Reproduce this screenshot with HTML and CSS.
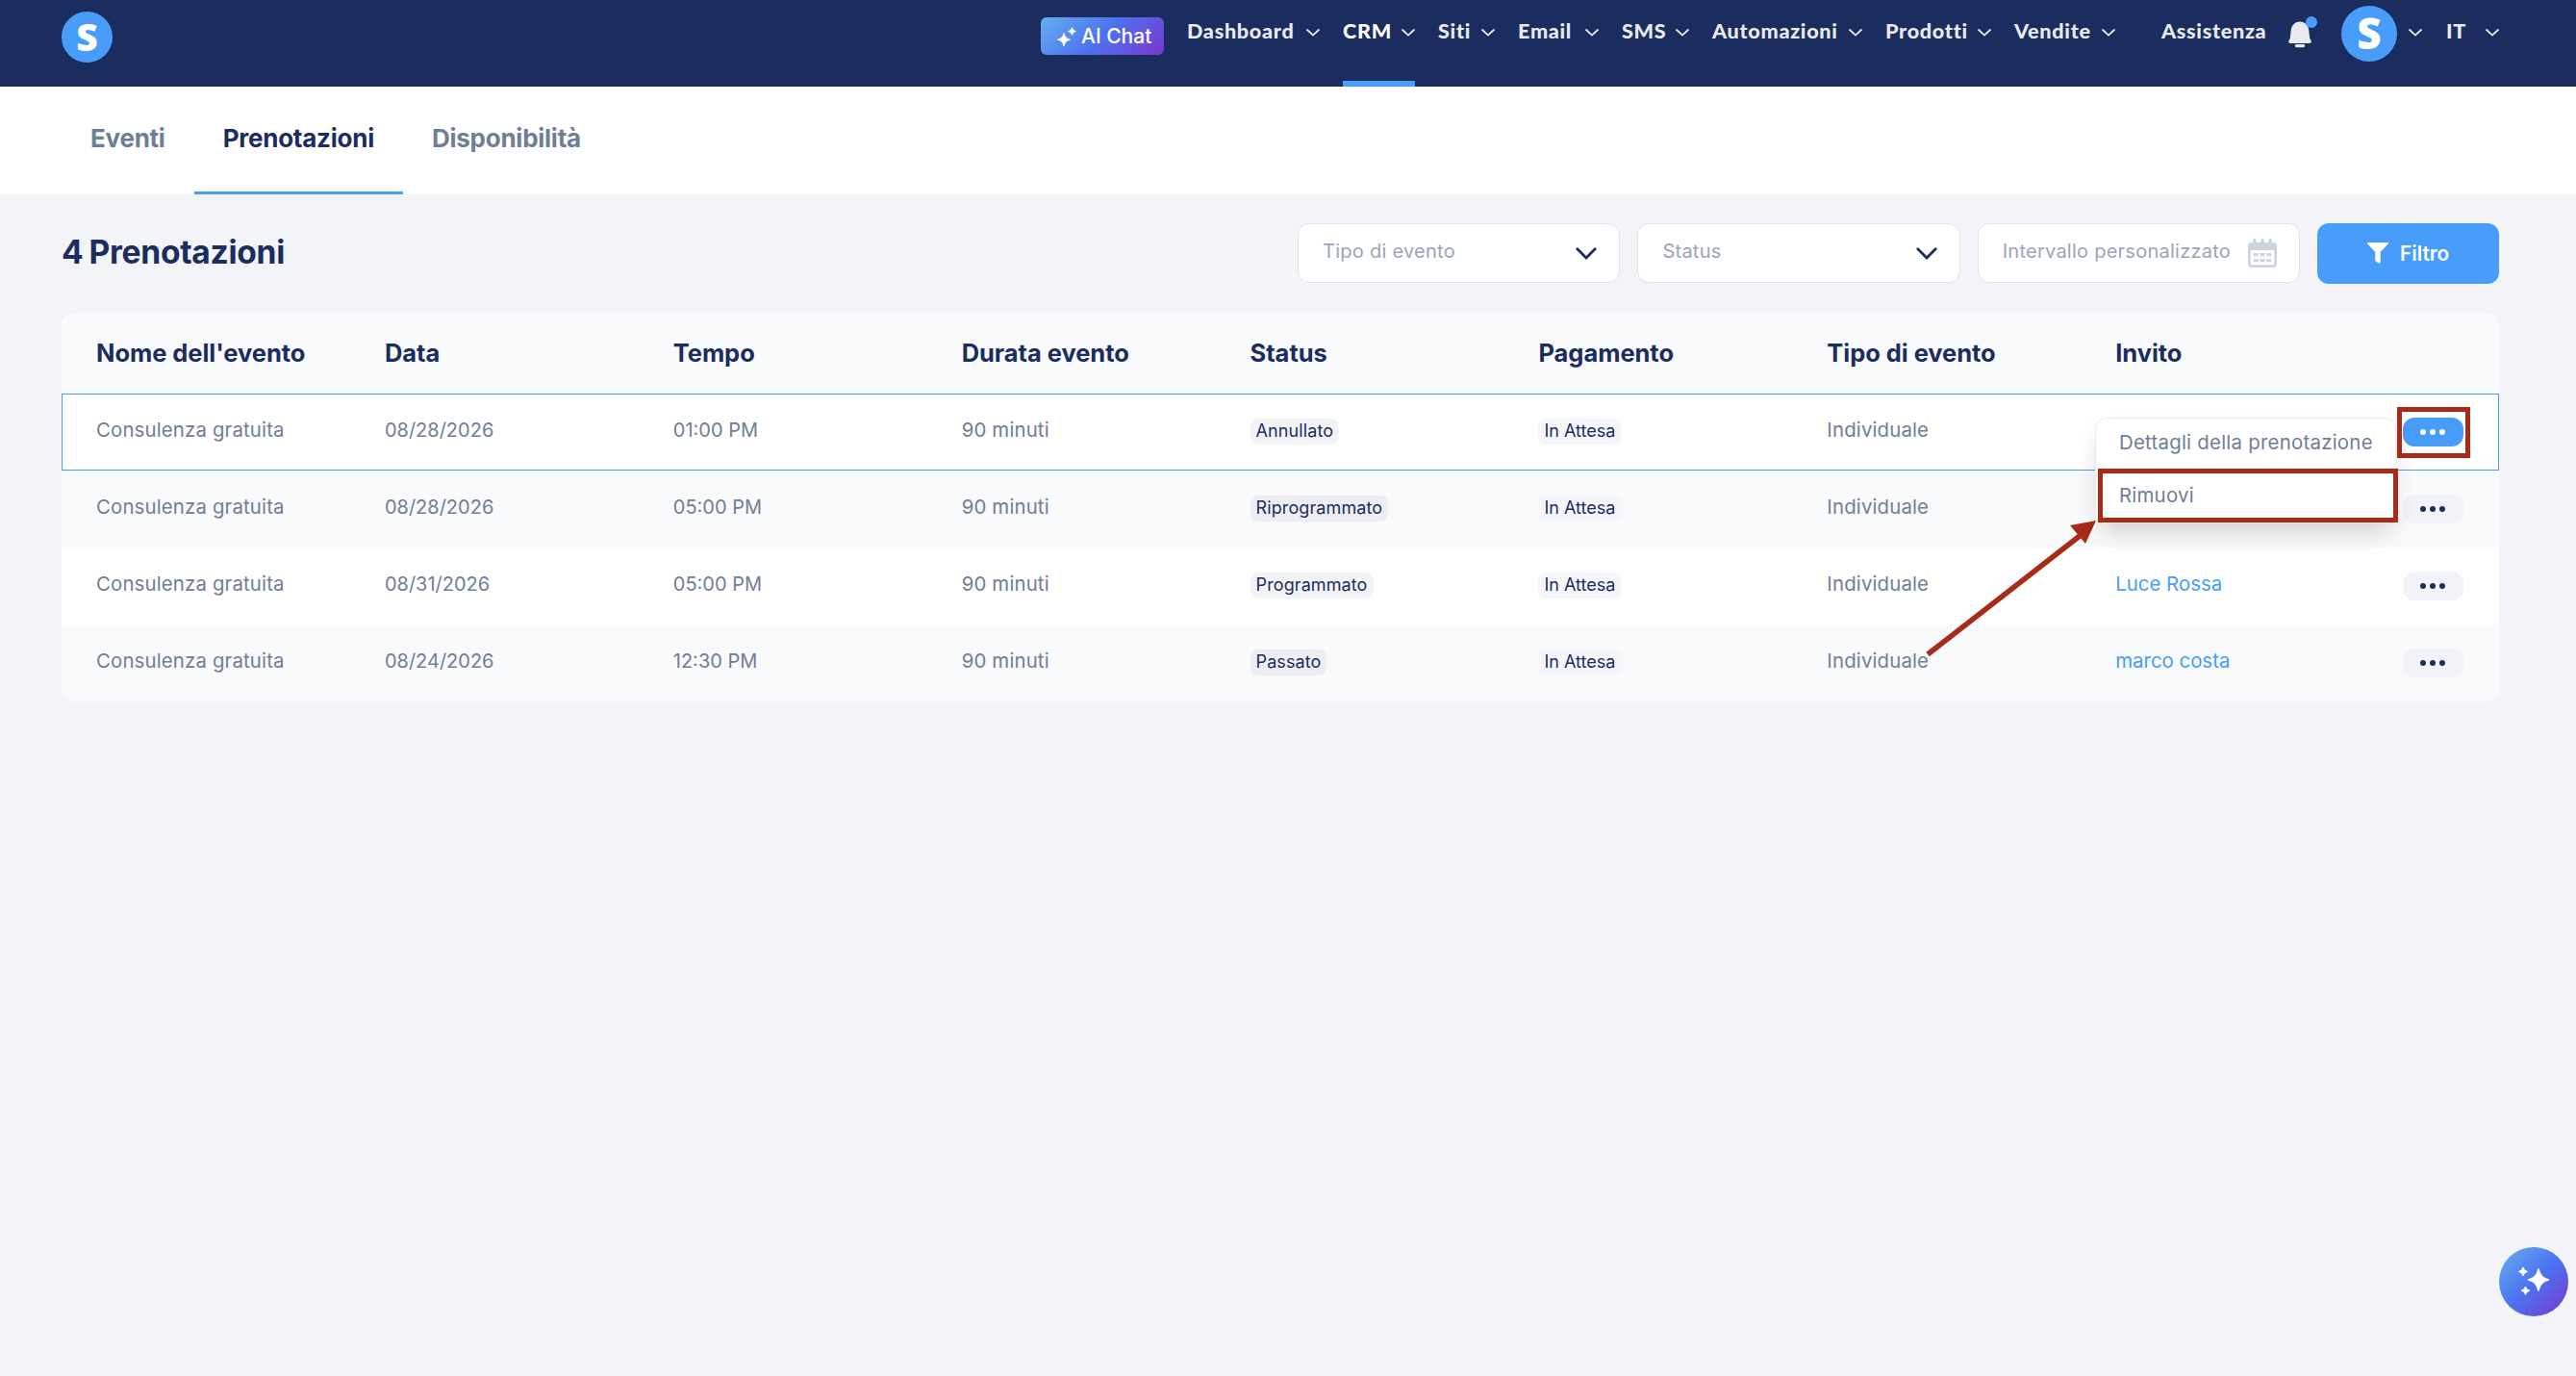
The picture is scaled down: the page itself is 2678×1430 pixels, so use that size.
FILE: index.html
```html
<!DOCTYPE html>
<html lang="it">
<head>
    <meta charset="UTF-8">
    <meta name="viewport" content="width=device-width, initial-scale=1.0">
    <title>Prenotazioni</title>
    <link rel="stylesheet" href="styles.css">
</head>
<body>

    <!-- Shared icons -->
    <svg class="sprite" width="0" height="0">
        <symbol id="chevron" viewBox="0 0 14 8">
            <path d="M1 1l6 5.6L13 1" fill="none" stroke="currentColor" stroke-width="1.8" stroke-linecap="round"/>
        </symbol>
        <symbol id="select-arrow" viewBox="0 0 22 13">
            <path d="M1.8 1.8L11 11l9.2-9.2" fill="none" stroke="currentColor" stroke-width="2.8" stroke-linecap="round"/>
        </symbol>
        <symbol id="dots" viewBox="0 0 26 6">
            <circle cx="3" cy="3" r="3"/>
            <circle cx="13" cy="3" r="3"/>
            <circle cx="23" cy="3" r="3"/>
        </symbol>
    </svg>

    <header class="header">
        <div class="logo">S</div>
        <button class="ai-chat">
            <svg width="20" height="20" viewBox="0 0 20 20" fill="#fff">
                <path d="M7 6.5Q8 12 13.5 13.2Q8 14.4 7 20Q6 14.4 .3 13.2Q6 12 7 6.5Z" stroke="#fff" stroke-width=".8"/>
                <path d="M15.5 .3Q16.2 3.8 19.8 4.5Q16.2 5.2 15.5 8.7Q14.8 5.2 11.2 4.5Q14.8 3.8 15.5 .3Z" stroke="#fff" stroke-width=".5"/>
            </svg>
            AI Chat
        </button>
        <nav class="nav">
            <a class="nav-item">Dashboard <svg class="chevron"><use href="#chevron"/></svg></a>
            <a class="nav-item active">CRM <svg class="chevron"><use href="#chevron"/></svg></a>
            <a class="nav-item">Siti <svg class="chevron"><use href="#chevron"/></svg></a>
            <a class="nav-item">Email <svg class="chevron"><use href="#chevron"/></svg></a>
            <a class="nav-item">SMS <svg class="chevron"><use href="#chevron"/></svg></a>
            <a class="nav-item">Automazioni <svg class="chevron"><use href="#chevron"/></svg></a>
            <a class="nav-item">Prodotti <svg class="chevron"><use href="#chevron"/></svg></a>
            <a class="nav-item">Vendite <svg class="chevron"><use href="#chevron"/></svg></a>
        </nav>
        <div class="user-menu">
            <a class="nav-item support">Assistenza</a>
            <svg class="bell" width="30" height="33" viewBox="0 0 30 33">
                <path d="M12 5.5C6.5 5.5 3.3 9.5 2.7 14.5L1.8 22.5C1.6 24 .3 24.5 .3 26.3Q.3 28 2 28H22Q23.8 28 23.8 26.3C23.8 24.5 22.4 24 22.2 22.5L21.3 14.5C20.7 9.5 17.5 5.5 12 5.5Z" fill="#e9eaef"/>
                <rect x="6.8" y="29" width="10.4" height="3.2" rx="1.6" fill="#e9eaef"/>
                <circle cx="24" cy="6" r="6" fill="#479df9"/>
            </svg>
            <div class="avatar">S</div>
            <svg class="chevron"><use href="#chevron"/></svg>
            <a class="nav-item lang">IT <svg class="chevron"><use href="#chevron"/></svg></a>
        </div>
    </header>

    <div class="tabs">
        <a class="tab">Eventi</a>
        <a class="tab active">Prenotazioni</a>
        <a class="tab">Disponibilità</a>
    </div>

    <main class="content">
        <div class="toolbar">
            <h1>4 Prenotazioni</h1>
            <div class="field">Tipo di evento <svg class="select-arrow"><use href="#select-arrow"/></svg></div>
            <div class="field">Status <svg class="select-arrow"><use href="#select-arrow"/></svg></div>
            <div class="field">Intervallo personalizzato
                <svg class="calendar" width="30" height="30" viewBox="0 0 30 30">
                    <path fill="#cbd4e1" fill-rule="evenodd" d="M5 2Q5 0 6.7 0T8.5 2V4H13.3V2Q13.3 0 15 0T16.8 2V4H21.5V2Q21.5 0 23.3 0T25 2V4H26Q30 4 30 8V26Q30 30 26 30H4Q0 30 0 26V8Q0 4 4 4H5ZM2.7 12V25.5Q2.7 27.3 4.5 27.3H25.5Q27.3 27.3 27.3 25.5V12Z"/>
                    <g fill="#cbd4e1">
                        <rect x="5.7" y="15" width="5" height="3.3" rx=".8"/>
                        <rect x="12.5" y="15" width="5" height="3.3" rx=".8"/>
                        <rect x="19.3" y="15" width="5" height="3.3" rx=".8"/>
                        <rect x="5.7" y="21" width="5" height="3.3" rx=".8"/>
                        <rect x="12.5" y="21" width="5" height="3.3" rx=".8"/>
                        <rect x="19.3" y="21" width="5" height="3.3" rx=".8"/>
                    </g>
                </svg>
            </div>
            <button class="filter-btn">
                <svg width="22" height="22" viewBox="0 0 22 22" fill="#fff">
                    <path d="M.8 0H21.2Q22.5 .6 21.4 1.8L13.7 9.8V20.8Q13.5 21.9 12.3 21.5L9.2 19.8Q8.3 19 8.3 18V9.8L.5 1.8Q-.5 .6 .8 0Z"/>
                </svg>
                Filtro
            </button>
        </div>

        <div class="table">
            <div class="row head">
                <div>Nome dell'evento</div>
                <div>Data</div>
                <div>Tempo</div>
                <div>Durata evento</div>
                <div>Status</div>
                <div>Pagamento</div>
                <div>Tipo di evento</div>
                <div>Invito</div>
                <div></div>
            </div>
            <div class="row selected">
                <div>Consulenza gratuita</div>
                <div class="num">08/28/2026</div>
                <div class="num">01:00 PM</div>
                <div>90 minuti</div>
                <div><span class="badge">Annullato</span></div>
                <div><span class="badge pending">In Attesa</span></div>
                <div>Individuale</div>
                <div></div>
                <div class="actions">
                    <button class="more open"><svg width="26" height="6"><use href="#dots"/></svg></button>
                    <div class="menu">
                        <a>Dettagli della prenotazione</a>
                        <a class="marked">Rimuovi</a>
                    </div>
                    <div class="more-mark"></div>
                </div>
            </div>
            <div class="row">
                <div>Consulenza gratuita</div>
                <div class="num">08/28/2026</div>
                <div class="num">05:00 PM</div>
                <div>90 minuti</div>
                <div><span class="badge">Riprogrammato</span></div>
                <div><span class="badge pending">In Attesa</span></div>
                <div>Individuale</div>
                <div></div>
                <div class="actions"><button class="more"><svg width="26" height="6"><use href="#dots"/></svg></button></div>
            </div>
            <div class="row">
                <div>Consulenza gratuita</div>
                <div class="num">08/31/2026</div>
                <div class="num">05:00 PM</div>
                <div>90 minuti</div>
                <div><span class="badge">Programmato</span></div>
                <div><span class="badge pending">In Attesa</span></div>
                <div>Individuale</div>
                <div><a class="link">Luce Rossa</a></div>
                <div class="actions"><button class="more"><svg width="26" height="6"><use href="#dots"/></svg></button></div>
            </div>
            <div class="row">
                <div>Consulenza gratuita</div>
                <div class="num">08/24/2026</div>
                <div class="num">12:30 PM</div>
                <div>90 minuti</div>
                <div><span class="badge">Passato</span></div>
                <div><span class="badge pending">In Attesa</span></div>
                <div>Individuale</div>
                <div><a class="link">marco costa</a></div>
                <div class="actions"><button class="more"><svg width="26" height="6"><use href="#dots"/></svg></button></div>
            </div>
        </div>
    </main>

    <!-- Arrow pointing at the remove action -->
    <svg class="arrow" width="180" height="145" viewBox="0 0 180 145">
        <path d="M4 140L162 17" stroke="#a82b17" stroke-width="5.5"/>
        <path d="M179 1L152 6L168 25Z" fill="#a82b17"/>
    </svg>

    <button class="fab">
        <svg width="32" height="32" viewBox="0 0 32 32" fill="#fff">
            <path d="M21 3Q23 12.5 31.5 14Q23 15.5 21 25Q19 15.5 10.5 14Q19 12.5 21 3Z" stroke="#fff" stroke-width="1.5" stroke-linejoin="round"/>
            <path d="M5 1Q5.8 4.8 9.5 5.5Q5.8 6.2 5 10Q4.2 6.2 .5 5.5Q4.2 4.8 5 1Z" stroke="#fff"/>
            <path d="M7.5 21Q8.3 24.5 12 25.2Q8.3 26 7.5 29.5Q6.7 26 3 25.2Q6.7 24.5 7.5 21Z" stroke="#fff"/>
        </svg>
    </button>

</body>
</html>
```
FILE: styles.css
```css
* {
    box-sizing: border-box;
}
body {
    font-family: Inter, sans-serif;
    font-size: 20px;
    background-color: #f2f4f8;
    color: #6f7e97;
    margin: 0;
    min-height: 1430px;
}
button {
    font-family: inherit;
    border: none;
    padding: 0;
    cursor: pointer;
}
.sprite {
    position: absolute;
}

/* Header */
.header {
    display: flex;
    align-items: flex-start;
    height: 90px;
    padding: 0 80px 0 64px;
    background-color: #1b2d5f;
    border-bottom: 1px solid #14244f;
}
.logo,
.avatar {
    display: flex;
    align-items: center;
    justify-content: center;
    border-radius: 50%;
    background-color: #479df9;
    color: white;
    font-family: "Open Sans", sans-serif;
    font-weight: 800;
    line-height: 1;
}
.logo {
    width: 53px;
    height: 53px;
    margin-top: 12px;
    padding-bottom: 2px;
    font-size: 39px;
}
.avatar {
    width: 58px;
    height: 58px;
    margin: 6px 12px 0 25px;
    padding-bottom: 2px;
    font-size: 44px;
}
.ai-chat {
    display: flex;
    align-items: center;
    gap: 5px;
    width: 128px;
    height: 39px;
    margin: 18px 24px 0 auto;
    padding-left: 17px;
    border-radius: 6px;
    background: linear-gradient(135deg, #67afee 0%, #4c74f0 48%, #7a36cc 100%);
    color: white;
    font-size: 21px;
    font-weight: 500;
    white-space: nowrap;
}
.nav {
    display: grid;
    grid-template-columns: 138px 75px 59px 84px 70px 156px 110px 105px;
    column-gap: 24px;
}
.nav-item {
    display: flex;
    align-items: flex-start;
    justify-content: space-between;
    height: 90px;
    padding-top: 20px;
    color: #e9eaef;
    font-family: Lato, sans-serif;
    font-size: 21.6px;
    font-weight: 900;
    letter-spacing: 0.7px;
    line-height: 24px;
    white-space: nowrap;
}
.nav-item.active {
    color: white;
    border-bottom: 6px solid #479df9;
}
.chevron {
    width: 14px;
    height: 8px;
    margin-top: 10px;
    color: #e9eaef;
}
.user-menu {
    display: flex;
    align-items: flex-start;
    margin-left: 48px;
}
.support {
    width: 132px;
}
.bell {
    margin-top: 17px;
}
.user-menu > .chevron {
    margin-top: 30px;
}
.lang {
    width: 55px;
    margin-left: 25px;
}

/* Tabs */
.tabs {
    display: flex;
    height: 112px;
    padding-left: 64px;
    background-color: white;
}
.tab {
    display: flex;
    align-items: center;
    padding: 0 30px 2px;
    border-bottom: 3px solid transparent;
    color: #6f7e97;
    font-size: 26px;
    font-weight: 700;
    letter-spacing: -0.25px;
}
.tab.active {
    color: #1b2d5f;
    border-bottom-color: #479df9;
}

/* Title and filters */
.content {
    padding: 30px 80px 0 64px;
}
.toolbar {
    display: flex;
    align-items: flex-start;
    gap: 18px;
    height: 63px;
}
h1 {
    margin: 0 auto 0 0;
    color: #1b2d5f;
    font-size: 33.6px;
    font-weight: 700;
    letter-spacing: -0.3px;
    word-spacing: -1.5px;
    line-height: 60px;
}
.field {
    display: flex;
    align-items: center;
    justify-content: space-between;
    width: 335.3px;
    height: 62px;
    padding: 0 23px 4px 25px;
    background-color: white;
    border: 1px solid #dfe4ea;
    border-radius: 12px;
    color: #9aa5b8;
    letter-spacing: 0.25px;
    white-space: nowrap;
}
.select-arrow {
    width: 22px;
    height: 13px;
    margin-top: 4px;
    color: #1b2d5f;
}
.calendar {
    margin-top: 4px;
}
.filter-btn {
    display: flex;
    align-items: center;
    gap: 12px;
    width: 189px;
    height: 63px;
    padding: 0 0 1px 52px;
    border-radius: 12px;
    background-color: #479df9;
    color: white;
    font-size: 20.8px;
    font-weight: 600;
}

/* Bookings table */
.table {
    margin-top: 30px;
    border-radius: 12px;
    background-color: #f9fafc;
}
.row {
    display: grid;
    grid-template-columns: repeat(8, 299.9px) 134.8px;
    align-items: center;
    height: 80px;
    font-size: 20.4px;
    letter-spacing: 0.15px;
}
.row > div {
    padding: 0 0 5px 36px;
}
.row:nth-child(even) {
    background-color: white;
}
.row.head {
    height: 84px;
    color: #1b2d5f;
    font-size: 25.5px;
    font-weight: 700;
    letter-spacing: -0.05px;
}
.row.head > div {
    padding-bottom: 2px;
}
.row.selected {
    box-shadow: inset 0 0 0 1px #479df9;
}
.row > .num {
    font-size: 20px;
    letter-spacing: 0;
}
.badge {
    display: inline-block;
    height: 27px;
    padding: 0 6px;
    margin-top: 4px;
    border-radius: 8px;
    background-color: rgba(27, 50, 60, 0.06);
    color: #1b2d5f;
    font-size: 18px;
    letter-spacing: 0.1px;
    line-height: 26px;
}
.badge.pending {
    background-color: #f5f6fa;
    letter-spacing: 0;
}
.link {
    color: #479df9;
    letter-spacing: 0;
}
.row > .actions {
    position: relative;
    height: 30px;
    padding: 0 0 0 34.8px;
}
.more {
    display: flex;
    align-items: center;
    justify-content: center;
    width: 63px;
    height: 30px;
    border-radius: 12px;
    background-color: #f2f3f8;
    fill: #1b2d5f;
}
.more.open {
    background-color: #479df9;
    fill: white;
}

/* Row menu */
.menu {
    position: absolute;
    top: 0;
    right: 107px;
    z-index: 1;
    width: 313px;
    border: 1px solid #e9ebee;
    border-radius: 12px;
    background-color: white;
    box-shadow: 0 14px 24px -6px rgba(40, 50, 45, 0.22);
}
.menu a {
    display: block;
    position: relative;
    height: 54px;
    padding-left: 24px;
    letter-spacing: 0.25px;
    line-height: 50px;
    white-space: nowrap;
}
.menu a + a {
    border-top: 1px solid #f2f3f6;
}
.menu .marked::after {
    content: "";
    position: absolute;
    inset: -3px -3px 0 2px;
    border: 5px solid #a82b17;
}
.more-mark {
    position: absolute;
    top: -11px;
    left: 28.8px;
    z-index: 1;
    width: 76px;
    height: 53px;
    border: 5px solid #a82b17;
}
.arrow {
    position: absolute;
    top: 540px;
    left: 2000px;
}

/* Assistant button */
.fab {
    position: fixed;
    right: 8px;
    bottom: 62px;
    display: flex;
    align-items: center;
    justify-content: center;
    width: 72px;
    height: 72px;
    border-radius: 50%;
    background: linear-gradient(135deg, #67afee 0%, #4c74f0 50%, #7a36cc 100%);
}
```
